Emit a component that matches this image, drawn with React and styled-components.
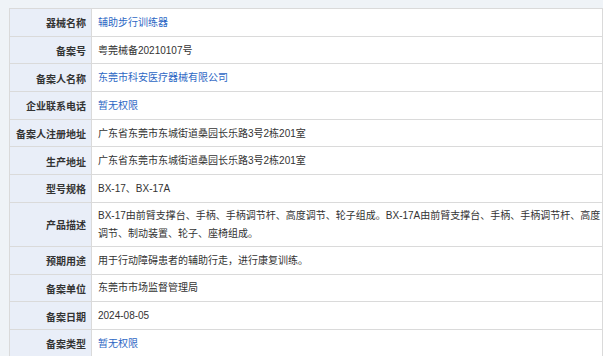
import React from 'react'
import styled, { createGlobalStyle } from 'styled-components'

const rows = [
  { label: '器械名称', value: '辅助步行训练器', link: true },
  { label: '备案号', value: '粤莞械备20210107号' },
  { label: '备案人名称', value: '东莞市科安医疗器械有限公司', link: true },
  { label: '企业联系电话', value: '暂无权限', link: true },
  { label: '备案人注册地址', value: '广东省东莞市东城街道桑园长乐路3号2栋201室' },
  { label: '生产地址', value: '广东省东莞市东城街道桑园长乐路3号2栋201室' },
  { label: '型号规格', value: 'BX-17、BX-17A' },
  {
    label: '产品描述',
    value: 'BX-17由前臂支撑台、手柄、手柄调节杆、高度调节、轮子组成。BX-17A由前臂支撑台、手柄、手柄调节杆、高度调节、制动装置、轮子、座椅组成。',
  },
  { label: '预期用途', value: '用于行动障碍患者的辅助行走，进行康复训练。' },
  { label: '备案单位', value: '东莞市市场监督管理局' },
  { label: '备案日期', value: '2024-08-05' },
  { label: '备案类型', value: '暂无权限', link: true },
]

export default function App() {
  return (
    <>
      <Global />
      <Page>
        <Table>
          <tbody>
            {rows.map((r) => (
              <Row key={r.label}>
                <Label>{r.label}</Label>
                <Value $link={r.link}>{r.value}</Value>
              </Row>
            ))}
          </tbody>
        </Table>
      </Page>
    </>
  )
}

const Global = createGlobalStyle`
  html, body {
    margin: 0;
    background: #eff3f7;
  }
  body {
    font-family: "Liberation Sans", "Noto Sans CJK SC", sans-serif;
  }
`;

const Page = styled.div`
  padding: 8px 0 0 9px;
  width: 603px;
  height: 356px;
  box-sizing: border-box;
  overflow: hidden;
`;

const Table = styled.table`
  width: 594px;
  border-collapse: collapse;
  table-layout: fixed;
  font-size: 10px;
  color: #333;
`;

const Row = styled.tr`
  height: 27.7px;
`;

const Label = styled.td`
  width: 76px;
  padding: 1px 5px 0 0;
  background: #e9eef8;
  border: 1px solid #dadada;
  text-align: right;
  font-weight: bold;
  color: #333;
  white-space: nowrap;
`;

const Value = styled.td`
  padding: 4px 1px 3px 6px;
  background: #fff;
  border: 1px solid #dadada;
  line-height: 18px;
  color: ${(p) => (p.$link ? '#2d67c4' : '#333')};
`;
